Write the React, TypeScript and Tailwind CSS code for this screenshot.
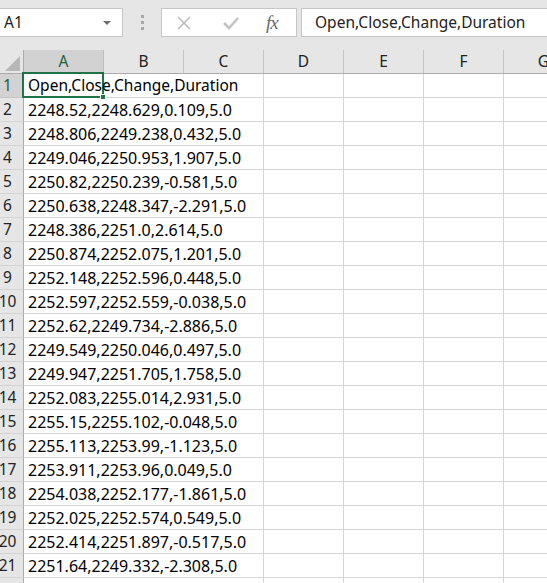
import React from 'react';

const rows: string[] = [
  'Open,Close,Change,Duration',
  '2248.52,2248.629,0.109,5.0',
  '2248.806,2249.238,0.432,5.0',
  '2249.046,2250.953,1.907,5.0',
  '2250.82,2250.239,-0.581,5.0',
  '2250.638,2248.347,-2.291,5.0',
  '2248.386,2251.0,2.614,5.0',
  '2250.874,2252.075,1.201,5.0',
  '2252.148,2252.596,0.448,5.0',
  '2252.597,2252.559,-0.038,5.0',
  '2252.62,2249.734,-2.886,5.0',
  '2249.549,2250.046,0.497,5.0',
  '2249.947,2251.705,1.758,5.0',
  '2252.083,2255.014,2.931,5.0',
  '2255.15,2255.102,-0.048,5.0',
  '2255.113,2253.99,-1.123,5.0',
  '2253.911,2253.96,0.049,5.0',
  '2254.038,2252.177,-1.861,5.0',
  '2252.025,2252.574,0.549,5.0',
  '2252.414,2251.897,-0.517,5.0',
  '2251.64,2249.332,-2.308,5.0',
  '',
];

const cols = ['A', 'B', 'C', 'D', 'E', 'F', 'G'];

const FormulaBar = () => (
  <div className="h-[50px] bg-[#e6e6e6] flex items-start pt-[8px]">
    <div className="w-[123px] h-[29px] bg-white border border-l-0 border-[#c6c6c6] flex items-center justify-between pl-[4px] pr-[11px]">
      <span className="text-[15.5px] text-[#222]">A1</span>
      <div className="w-0 h-0 border-l-[4px] border-r-[4px] border-t-[4px] border-l-transparent border-r-transparent border-t-[#6e6e6e]" />
    </div>
    <div className="w-[38px] h-[29px] flex flex-col items-center justify-center gap-[3px]">
      <div className="w-[3px] h-[3px] bg-[#a8a8a8]" />
      <div className="w-[3px] h-[3px] bg-[#a8a8a8]" />
      <div className="w-[3px] h-[3px] bg-[#a8a8a8]" />
    </div>
    <div className="w-[136px] h-[29px] bg-white border border-[#c6c6c6] flex items-center">
      <svg width="14" height="14" viewBox="0 0 14 14" className="ml-[15px]">
        <path d="M1 1 L13 13 M13 1 L1 13" stroke="#bdbdbd" strokeWidth="1.6" fill="none" />
      </svg>
      <svg width="16" height="14" viewBox="0 0 16 14" className="ml-[32px]">
        <path d="M1 7 L6 12 L15 2" stroke="#c4c4c4" strokeWidth="2.6" fill="none" />
      </svg>
      <span className="ml-[27px] text-[19px] leading-none italic tracking-[-1px] text-[#6a6a6a] font-['Liberation_Serif',serif]">fx</span>
    </div>
    <div className="ml-[4px] flex-1 h-[29px] bg-white border border-r-0 border-[#c6c6c6] flex items-center pl-[13px]">
      <span className="text-[15.5px] text-[#222]">Open,Close,Change,Duration</span>
    </div>
  </div>
);

export default function App() {
  return (
    <div className="w-[547px] h-[583px] overflow-hidden bg-white font-['Noto_Sans',sans-serif] text-black">
      <FormulaBar />
      <div className="grid grid-cols-[24px_repeat(7,80px)] grid-rows-[24px] auto-rows-[24px] w-[584px]">
        <div className="bg-[#e6e6e6] border-r border-b border-[#ababab] flex items-end justify-end pr-[3px] pb-[2px]">
          <div className="w-0 h-0 [border-bottom:15px_solid_#b7b7b7] [border-left:15px_solid_transparent]" />
        </div>
        {cols.map((c) => (
          <div
            key={c}
            className={
              c === 'A'
                ? 'bg-[#d2d2d2] border-r border-b border-r-[#bdbdbd] border-b-[#ababab] flex items-center justify-center text-[15.5px] text-[#1d5e3d]'
                : 'bg-[#e6e6e6] border-r border-b border-r-[#c6c6c6] border-b-[#ababab] flex items-center justify-center text-[15.5px] text-[#222]'
            }
          >
            {c}
          </div>
        ))}
        {rows.map((text, i) => (
          <React.Fragment key={i}>
            <div
              className={
                i === 0
                  ? 'bg-[#d2d2d2] border-r border-b border-r-[#ababab] border-b-[#c6c6c6] flex items-center justify-center pr-[8px] text-[15.5px] text-[#1d5e3d]'
                  : 'bg-[#e6e6e6] border-r border-b border-r-[#ababab] border-b-[#d4d4d4] flex items-center justify-center pr-[8px] text-[15.5px] text-[#222]'
              }
            >
              {text ? i + 1 : ''}
            </div>
            <div
              className={
                i === 0
                  ? 'col-span-3 relative border-r border-b border-[#d4d4d4] flex items-center pl-[4px] text-[15.5px] whitespace-nowrap'
                  : 'col-span-3 relative border-r border-b border-[#d4d4d4] flex items-center pl-[4px] text-[16px] whitespace-nowrap'
              }
            >
              {i === 0 && (
                <div className="absolute left-[-2px] top-[-2px] w-[82px] h-[26px] border-2 border-[#217346]">
                  <div className="absolute right-[-4px] bottom-[-4px] w-[6px] h-[6px] bg-[#217346] border border-white" />
                </div>
              )}
              <span className="relative">{text}</span>
            </div>
            <div className="border-r border-b border-[#d4d4d4]" />
            <div className="border-r border-b border-[#d4d4d4]" />
            <div className="border-r border-b border-[#d4d4d4]" />
            <div className="border-r border-b border-[#d4d4d4]" />
          </React.Fragment>
        ))}
      </div>
    </div>
  );
}
